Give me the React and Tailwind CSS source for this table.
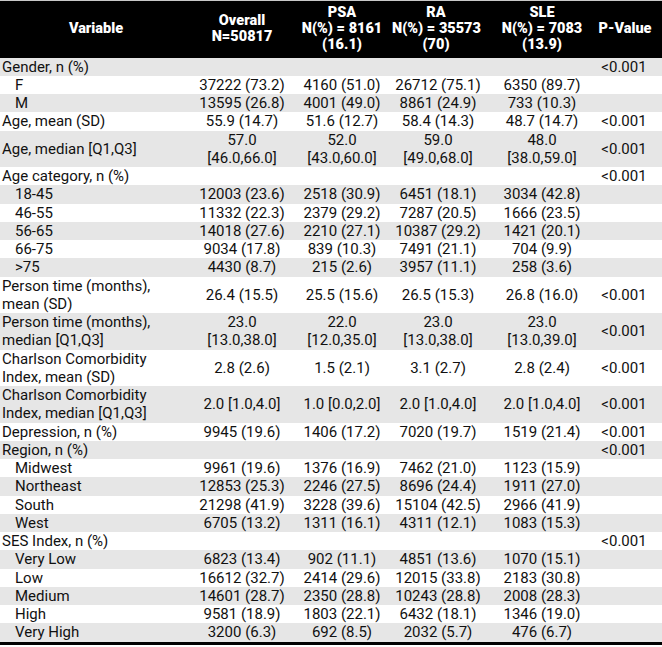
const rows = [
  { label: "Gender, n (%)", p: "<0.001" },
  { label: "F", sub: true, v: ["37222 (73.2)", "4160 (51.0)", "26712 (75.1)", "6350 (89.7)"] },
  { label: "M", sub: true, v: ["13595 (26.8)", "4001 (49.0)", "8861 (24.9)", "733 (10.3)"] },
  { label: "Age, mean (SD)", v: ["55.9 (14.7)", "51.6 (12.7)", "58.4 (14.3)", "48.7 (14.7)"], p: "<0.001" },
  { label: "Age, median [Q1,Q3]", tall: true, v: [["57.0", "[46.0,66.0]"], ["52.0", "[43.0,60.0]"], ["59.0", "[49.0,68.0]"], ["48.0", "[38.0,59.0]"]], p: "<0.001" },
  { label: "Age category, n (%)", p: "<0.001" },
  { label: "18-45", sub: true, v: ["12003 (23.6)", "2518 (30.9)", "6451 (18.1)", "3034 (42.8)"] },
  { label: "46-55", sub: true, v: ["11332 (22.3)", "2379 (29.2)", "7287 (20.5)", "1666 (23.5)"] },
  { label: "56-65", sub: true, v: ["14018 (27.6)", "2210 (27.1)", "10387 (29.2)", "1421 (20.1)"] },
  { label: "66-75", sub: true, v: ["9034 (17.8)", "839 (10.3)", "7491 (21.1)", "704 (9.9)"] },
  { label: ">75", sub: true, v: ["4430 (8.7)", "215 (2.6)", "3957 (11.1)", "258 (3.6)"] },
  { label: ["Person time (months),", "mean (SD)"], tall: true, v: ["26.4 (15.5)", "25.5 (15.6)", "26.5 (15.3)", "26.8 (16.0)"], p: "<0.001" },
  { label: ["Person time (months),", "median [Q1,Q3]"], tall: true, v: [["23.0", "[13.0,38.0]"], ["22.0", "[12.0,35.0]"], ["23.0", "[13.0,38.0]"], ["23.0", "[13.0,39.0]"]], p: "<0.001" },
  { label: ["Charlson Comorbidity", "Index, mean (SD)"], tall: true, v: ["2.8 (2.6)", "1.5 (2.1)", "3.1 (2.7)", "2.8 (2.4)"], p: "<0.001" },
  { label: ["Charlson Comorbidity", "Index, median [Q1,Q3]"], tall: true, v: ["2.0 [1.0,4.0]", "1.0 [0.0,2.0]", "2.0 [1.0,4.0]", "2.0 [1.0,4.0]"], p: "<0.001" },
  { label: "Depression, n (%)", v: ["9945 (19.6)", "1406 (17.2)", "7020 (19.7)", "1519 (21.4)"], p: "<0.001" },
  { label: "Region, n (%)", p: "<0.001" },
  { label: "Midwest", sub: true, v: ["9961 (19.6)", "1376 (16.9)", "7462 (21.0)", "1123 (15.9)"] },
  { label: "Northeast", sub: true, v: ["12853 (25.3)", "2246 (27.5)", "8696 (24.4)", "1911 (27.0)"] },
  { label: "South", sub: true, v: ["21298 (41.9)", "3228 (39.6)", "15104 (42.5)", "2966 (41.9)"] },
  { label: "West", sub: true, v: ["6705 (13.2)", "1311 (16.1)", "4311 (12.1)", "1083 (15.3)"] },
  { label: "SES Index, n (%)", p: "<0.001" },
  { label: "Very Low", sub: true, v: ["6823 (13.4)", "902 (11.1)", "4851 (13.6)", "1070 (15.1)"] },
  { label: "Low", sub: true, v: ["16612 (32.7)", "2414 (29.6)", "12015 (33.8)", "2183 (30.8)"] },
  { label: "Medium", sub: true, v: ["14601 (28.7)", "2350 (28.8)", "10243 (28.8)", "2008 (28.3)"] },
  { label: "High", sub: true, v: ["9581 (18.9)", "1803 (22.1)", "6432 (18.1)", "1346 (19.0)"] },
  { label: "Very High", sub: true, v: ["3200 (6.3)", "692 (8.5)", "2032 (5.7)", "476 (6.7)"] },
];

const grid = "grid grid-cols-[192px_100px_100px_92px_110px_68px]";

const Lines = ({ text }) =>
  Array.isArray(text) ? text.map((t, i) => <div key={i}>{t}</div>) : text;

const App = () => {
  return (
    <div className="w-[662px] bg-white text-[#111] text-[15px] leading-[18.25px] font-['Roboto','Liberation_Sans',sans-serif]">
      <div className="border-t border-[#c8c8c8]">
        <div className={`${grid} h-[56.5px] bg-black text-white font-black text-[14.5px] leading-[16px] items-center text-center`}>
          <div>Variable</div>
          <div>
            <div>Overall</div>
            <div>N=50817</div>
          </div>
          <div>
            <div>PSA</div>
            <div className="whitespace-nowrap">N(%) = 8161</div>
            <div>(16.1)</div>
          </div>
          <div className="pr-[4px]">
            <div>RA</div>
            <div className="whitespace-nowrap">N(%) = 35573</div>
            <div>(70)</div>
          </div>
          <div className="pl-[6px]">
            <div>SLE</div>
            <div className="whitespace-nowrap">N(%) = 7083</div>
            <div>(13.9)</div>
          </div>
          <div className="pr-[6px] whitespace-nowrap">P-Value</div>
        </div>
      </div>

      {rows.map((r, i) => (
        <div
          key={i}
          className={`${grid} items-center ${r.tall ? "h-[36.5px]" : "h-[18.25px]"} ${i % 2 === 0 ? "bg-[#e6e6e6]" : "bg-white"}`}
        >
          <div className={`whitespace-nowrap ${r.sub ? "pl-[15px]" : "pl-[2px]"}`}>
            <Lines text={r.label} />
          </div>
          {[0, 1, 2, 3].map((c) => (
            <div key={c} className={`text-center whitespace-nowrap ${c === 3 ? "pl-[6px]" : ""}`}>
              {r.v ? <Lines text={r.v[c]} /> : null}
            </div>
          ))}
          <div className="text-center pr-[8px]">{r.p || ""}</div>
        </div>
      ))}
      <div className="h-[3px] bg-black" />
    </div>
  );
};

export default App;
